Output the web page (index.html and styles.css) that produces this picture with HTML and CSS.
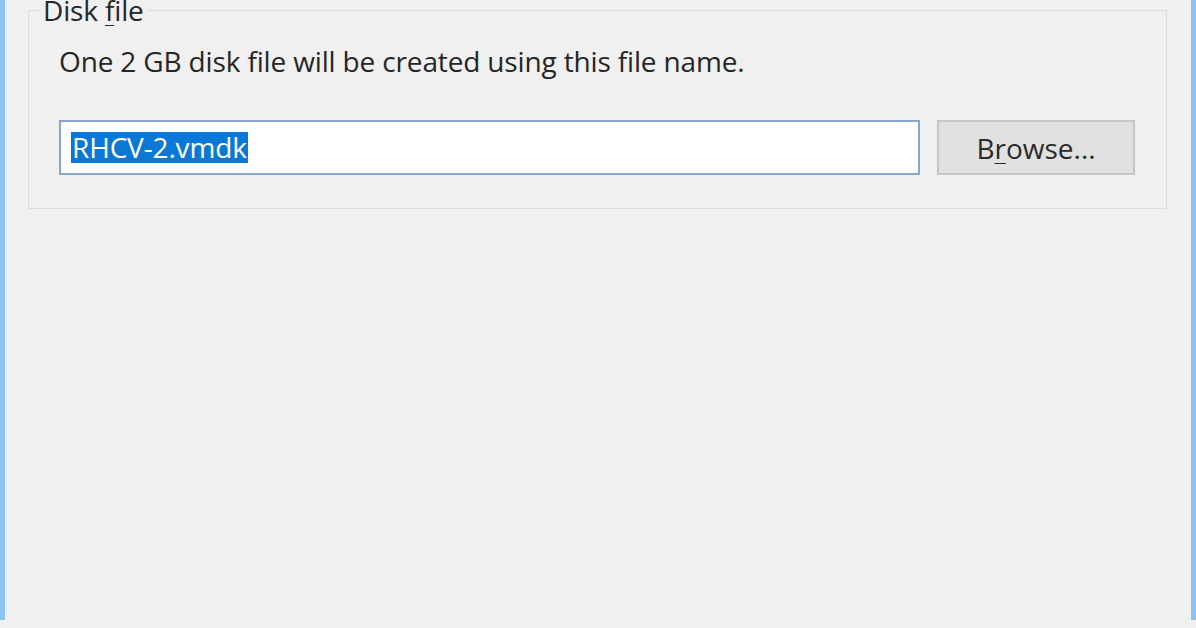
FILE: index.html
```html
<!DOCTYPE html>
<html>
<head>
<meta charset="utf-8">
<link rel="stylesheet" href="styles.css">
</head>
<body>
<div class="window">
  <fieldset class="group">
    <legend class="legend">Disk <u>f</u>ile</legend>
    <p class="desc">One 2 GB disk file will be created using this file name.</p>
    <div class="row">
      <div class="input"><span class="sel">RHCV-2.vmdk</span></div>
      <button class="btn">B<u>r</u>owse...</button>
    </div>
  </fieldset>
</div>
</body>
</html>
```

FILE: styles.css
```css
html, body {
  margin: 0;
  padding: 0;
  background: #f0f0f0;
  overflow: hidden;
}
.window {
  box-sizing: border-box;
  width: 1196px;
  height: 628px;
  border-left: 5px solid #8ec3ef;
  border-right: 5px solid #8ec3ef;
  background: #f0f0f0;
  padding: 0 24px 0 23px;
  font-family: "Open Sans", "Noto Sans", sans-serif;
  font-size: 28px;
  letter-spacing: -0.15px;
  color: #262626;
}
.group {
  margin: -8px 0 0 0;
  padding: 0 31px 32px 30px;
  border: 1px solid #dcdcdc;
  box-sizing: border-box;
  height: 217px;
  min-width: 0;
}
.legend {
  margin-left: -20px;
  padding: 0 4px;
  line-height: 36px;
}
.legend u, .btn u {
  text-decoration-thickness: 1px;
  text-underline-offset: 4px;
}
.desc {
  margin: 15px 0 0 0;
  line-height: 36px;
}
.row {
  display: flex;
  align-items: center;
  gap: 17px;
  margin-top: 41px;
}
.input {
  box-sizing: border-box;
  flex: 0 0 861px;
  height: 55px;
  border: 2px solid #86a8d0;
  background: #fff;
  display: flex;
  align-items: center;
  padding-left: 10px;
}
.sel {
  background: #0a78d4;
  color: #fff;
  line-height: 31px;
  padding: 0 1px;
}
.btn {
  box-sizing: border-box;
  flex: 0 0 198px;
  height: 55px;
  border: 2px solid #c6c6c6;
  background: #e1e1e1;
  font: inherit;
  color: #2a2a2a;
  padding: 0;
}
```
